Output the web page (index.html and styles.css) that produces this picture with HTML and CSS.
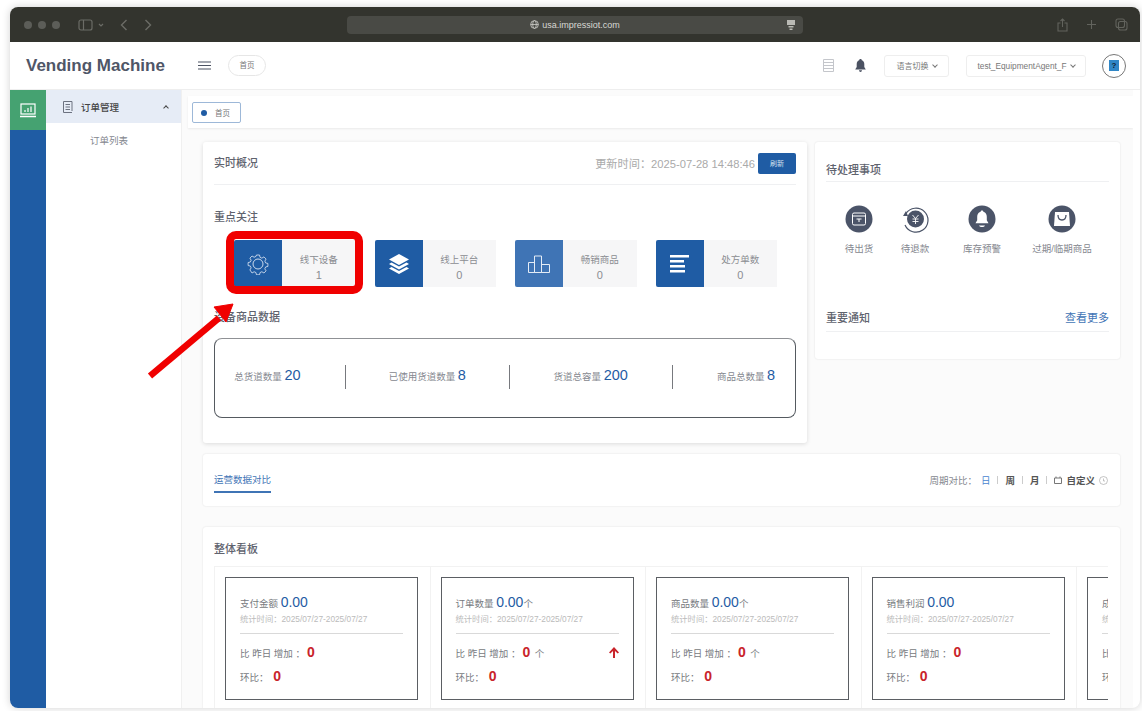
FILE: index.html
```html
<!doctype html>
<html lang="zh-CN">
    <head>
        <meta charset="UTF-8" />
        <title>Vending Machine</title>
        <link rel="stylesheet" href="styles.css">
    </head>
    <body>
        <div class="window">
            <!-- browser chrome -->
            <div class="chrome">
                <div class="chrome-left">
                    <span class="dot"></span><span class="dot"></span><span class="dot"></span>
                    <svg class="side-ico" width="26" height="12" viewBox="0 0 26 12" fill="none" stroke="#6b6c66" stroke-width="1.2"><rect x="1" y="1" width="13" height="10" rx="2"/><path d="M5.5 1v10"/><path d="M21 5l2 2 2-2"/></svg>
                    <svg class="nav-ico" width="8" height="12" viewBox="0 0 8 12" fill="none" stroke="#6b6c66" stroke-width="1.4"><path d="M6.5 1L1.5 6l5 5"/></svg>
                    <svg class="nav-ico" width="8" height="12" viewBox="0 0 8 12" fill="none" stroke="#6b6c66" stroke-width="1.4"><path d="M1.5 1l5 5-5 5"/></svg>
                </div>
                <div class="urlbar">
                    <span class="url"><svg width="9" height="9" viewBox="0 0 10 10" fill="none" stroke="#cfcfca" stroke-width=".9"><circle cx="5" cy="5" r="4.3"/><ellipse cx="5" cy="5" rx="2" ry="4.3"/><path d="M.7 5h8.6"/></svg>usa.impressiot.com</span>
                    <svg class="url-ico" width="10" height="12" viewBox="0 0 10 12" fill="#b9b9b4"><path d="M1 1h8v5H1zM2.5 7h5v1.500h-5zM3.500 9.500h3V11h-3z"/></svg>
                </div>
                <div class="chrome-right">
                    <svg width="11" height="14" viewBox="0 0 11 14" fill="none" stroke="#62635d" stroke-width="1.1"><path d="M3.500 5H1v8h9V5H7.500M5.500 9V1M3.500 3l2-2 2 2"/></svg>
                    <svg width="11" height="11" viewBox="0 0 11 11" fill="none" stroke="#62635d" stroke-width="1.1"><path d="M5.500 1v9M1 5.500h9"/></svg>
                    <svg width="13" height="13" viewBox="0 0 13 13" fill="none" stroke="#62635d" stroke-width="1.1"><rect x="1" y="1" width="8.500" height="8.500" rx="2"/><rect x="3.500" y="3.500" width="8.500" height="8.500" rx="2"/></svg>
                </div>
            </div>

            <!-- app header -->
            <header class="topbar">
                <div class="logo">Vending Machine</div>
                <svg class="burger" width="13" height="9" viewBox="0 0 13 9" fill="none" stroke="#4b5262" stroke-width="1.200"><path d="M0 1h13M0 4.500h13M0 8h13"/></svg>
                <span class="crumb">首页</span>
                <div class="topbar-right">
                    <svg class="doc-ico" width="11" height="13" viewBox="0 0 11 13" fill="none" stroke="#c4c6cb"><path d="M.5.500h10v12H.5zM.5 3.500h10M.5 6.500h10M.5 9.500h10"/></svg>
                    <svg class="bell-ico" width="11" height="13" viewBox="0 0 11 13" fill="#4b5262"><path d="M5.500 0C6.300 0 6.700.500 6.800 1.200 8.500 1.800 9.300 3.200 9.300 5v3l1.500 2.500H.2L1.700 8V5c0-1.800.8-3.200 2.500-3.800C4.300.500 4.700 0 5.500 0zM4 11.300h3C6.900 12.300 6.300 13 5.500 13S4.100 12.300 4 11.300z"/></svg>
                    <span class="select lang">语言切换 <i class="chev"></i></span>
                    <span class="select user">test_EquipmentAgent_F <i class="chev"></i></span>
                    <span class="avatar"><span class="avatar-img">?</span></span>
                </div>
            </header>

            <div class="body">
                <nav class="rail">
                    <div class="rail-item">
                        <svg width="16" height="15" viewBox="0 0 16 15" fill="none" stroke="#fff" stroke-width="1.200"><rect x="1" y="1" width="14" height="10"/><path d="M0 13.500h16" stroke-width="1.500"/><path d="M5 9V7M8 9V5M11 9V3.500"/></svg>
                    </div>
                </nav>
                <aside class="menu">
                    <div class="menu-head">
                        <svg width="10" height="12" viewBox="0 0 10 12" fill="none" stroke="#6c7280"><path d="M9 10V.5H.5v11H9M2.500 3.500h4.500M2.500 6h4.500M2.500 8.500h4.500"/></svg>
                        <span class="menu-title">订单管理</span>
                        <i class="chev up"></i>
                    </div>
                    <div class="menu-sub">订单列表</div>
                </aside>

                <main class="content">
                    <div class="tabs">
                        <span class="tab"><i class="tab-dot"></i>首页</span>
                    </div>

                    <div class="top-row">
                        <section class="card overview">
                            <div class="card-head">
                                <h3>实时概况</h3>
                                <div class="updated">更新时间：2025-07-28 14:48:46<button class="refresh">刷新</button></div>
                            </div>

                            <h3 class="focus-title">重点关注</h3>
                            <div class="tiles">
                                <div class="tile">
                                    <div class="tile-ico">
                                        <svg width="22" height="22" viewBox="0 0 22 22" fill="none" stroke="#dfe8f4" stroke-width=".9"><path d="M9.300 1h3.400l.6 2.600 2 .9 2.300-1.400 2.400 2.400-1.400 2.300.9 2 2.500.6v3.300l-2.500.6-.9 2-.1.100 1.500 2.200-2.400 2.400-2.300-1.400-2 .9-.6 2.500H9.300l-.6-2.500-2-.9-2.300 1.400L2 17.600l1.400-2.300-.9-2-2.500-.6V9.400l2.500-.6.9-2L2 4.500l2.400-2.400 2.300 1.400 2-.9z" transform="translate(1.100 1.100) scale(.9)"/><circle cx="11" cy="11" r="5"/></svg>
                                    </div>
                                    <div class="tile-text"><span>线下设备</span><span class="tile-num">1</span></div>
                                </div>
                                <div class="tile">
                                    <div class="tile-ico">
                                        <svg width="22" height="20" viewBox="0 0 22 20" fill="#fff"><path d="M11 0l10 5.500L11 11 1 5.500z"/><path d="M3.500 8.500l7.500 4.100 7.500-4.100 2.500 1.400L11 15.400 1 9.900z"/><path d="M3.500 13l7.500 4.100 7.500-4.100 2.500 1.400L11 20 1 14.400z"/></svg>
                                    </div>
                                    <div class="tile-text"><span>线上平台</span><span class="tile-num">0</span></div>
                                </div>
                                <div class="tile">
                                    <div class="tile-ico light">
                                        <svg width="22" height="18" viewBox="0 0 22 18" fill="none" stroke="#e4ecf6"><path d="M.5 7.500h6v10h-6zM6.500 1h7v16.500h-7zM13.500 9.500h8v8h-8z"/></svg>
                                    </div>
                                    <div class="tile-text"><span>畅销商品</span><span class="tile-num">0</span></div>
                                </div>
                                <div class="tile">
                                    <div class="tile-ico">
                                        <svg width="20" height="18" viewBox="0 0 20 18" fill="#fff"><path d="M0 0h19v2.500H0zM0 5h14v2.500H0zM0 10h15v2.500H0zM0 15h15v2.500H0z"/></svg>
                                    </div>
                                    <div class="tile-text"><span>处方单数</span><span class="tile-num">0</span></div>
                                </div>
                            </div>

                            <h3 class="device-title">设备商品数据</h3>
                            <div class="device-box">
                                <div class="device-item first">总货道数量 <b>20</b></div>
                                <div class="device-item">已使用货道数量 <b>8</b></div>
                                <div class="device-item">货道总容量 <b>200</b></div>
                                <div class="device-item last">商品总数量 <b>8</b></div>
                            </div>
                        </section>

                        <section class="card pending">
                            <div class="pending-head"><h3>待处理事项</h3></div>
                            <div class="todo">
                                <div class="todo-item w1">
                                    <svg width="28" height="28" viewBox="0 0 28 28"><circle cx="14" cy="14" r="13.500" fill="#4b5468"/><rect x="7.500" y="8" width="13" height="12" rx="1.500" fill="none" stroke="#fff"/><path d="M7.500 11h13M11.500 14h5M14 14v3" fill="none" stroke="#fff"/></svg>
                                    <span>待出货</span>
                                </div>
                                <div class="todo-item w2">
                                    <svg width="28" height="28" viewBox="0 0 28 28"><path d="M5 8.500A12 12 0 1 1 4 20" fill="none" stroke="#4b5468" stroke-width="1.200"/><path d="M2 11l3-5 2 5z" fill="#4b5468"/><circle cx="14.500" cy="14" r="8.500" fill="#4b5468"/><path d="M11.500 10l3 3.500 3-3.500M11.500 14h6M11.500 16.500h6M14.500 13.500V19" fill="none" stroke="#fff" stroke-width=".9"/></svg>
                                    <span>待退款</span>
                                </div>
                                <div class="todo-item w3">
                                    <svg width="28" height="28" viewBox="0 0 28 28"><circle cx="14" cy="14" r="13.500" fill="#4b5468"/><path d="M14 5.500c.8 0 1.300.5 1.400 1.200 2.500.7 3.400 2.800 3.400 5v3.500l1.700 3H7.500l1.700-3v-3.500c0-2.200.9-4.300 3.400-5 .1-.7.6-1.200 1.400-1.200z" fill="#fff"/><path d="M11 20.500h6c-.5 1.200-1.700 1.500-3 1.500s-2.500-.3-3-1.500z" fill="#fff"/></svg>
                                    <span>库存预警</span>
                                </div>
                                <div class="todo-item w4">
                                    <svg width="28" height="28" viewBox="0 0 28 28"><circle cx="14" cy="14" r="13.500" fill="#4b5468"/><path d="M7 7h14l1 14H6z" fill="#fff"/><path d="M10 10c0 3.500 1.500 5 4 5s4-1.500 4-5" fill="none" stroke="#4b5468" stroke-width="1.300"/></svg>
                                    <span>过期/临期商品</span>
                                </div>
                            </div>
                            <div class="notice-head"><h3>重要通知</h3><a class="more">查看更多</a></div>
                        </section>
                    </div>

                    <section class="card period">
                        <span class="period-tab">运营数据对比</span>
                        <div class="period-opts">
                            周期对比：<span class="on">日</span><i class="bar"></i><b>周</b><i class="bar"></i><b>月</b><i class="bar"></i>
                            <svg width="8" height="8" viewBox="0 0 8 8" fill="none" stroke="#777"><path d="M.5 2h7v5.500h-7zM2 .5v1.500M6 .5v1.500"/></svg>
                            <b>自定义</b>
                            <svg width="9" height="9" viewBox="0 0 9 9" fill="none" stroke="#aaa" stroke-width=".7"><circle cx="4.500" cy="4.500" r="4"/><path d="M4.500 2.500v2.500h1.500"/></svg>
                        </div>
                    </section>

                    <section class="card board">
                        <h3>整体看板</h3>
                        <div class="board-row">
                            <div class="cell">
                                <div class="stat">
                                    <div class="stat-main">支付金额 <b>0.00</b></div>
                                    <div class="stat-date">统计时间：2025/07/27-2025/07/27</div>
                                    <div class="stat-line">比 昨日 增加 ：<strong>0</strong></div>
                                    <div class="stat-line">环比： <strong>0</strong></div>
                                </div>
                            </div>
                            <div class="cell">
                                <div class="stat">
                                    <div class="stat-main">订单数量 <b>0.00</b>个</div>
                                    <div class="stat-date">统计时间：2025/07/27-2025/07/27</div>
                                    <div class="stat-line">比 昨日 增加 ：<strong>0</strong> 个
                                        <svg class="up-arrow" width="10" height="11" viewBox="0 0 10 11" fill="#c9242b"><path d="M5 0l5 5.500-1.300 1L6 4v7H4V4L1.300 6.500 0 5.500z"/></svg>
                                    </div>
                                    <div class="stat-line">环比： <strong>0</strong></div>
                                </div>
                            </div>
                            <div class="cell">
                                <div class="stat">
                                    <div class="stat-main">商品数量 <b>0.00</b>个</div>
                                    <div class="stat-date">统计时间：2025/07/27-2025/07/27</div>
                                    <div class="stat-line">比 昨日 增加 ：<strong>0</strong> 个</div>
                                    <div class="stat-line">环比： <strong>0</strong></div>
                                </div>
                            </div>
                            <div class="cell">
                                <div class="stat">
                                    <div class="stat-main">销售利润 <b>0.00</b></div>
                                    <div class="stat-date">统计时间：2025/07/27-2025/07/27</div>
                                    <div class="stat-line">比 昨日 增加 ：<strong>0</strong></div>
                                    <div class="stat-line">环比： <strong>0</strong></div>
                                </div>
                            </div>
                            <div class="cell">
                                <div class="stat">
                                    <div class="stat-main">成本金额 <b>0.00</b></div>
                                    <div class="stat-date">统计时间：2025/07/27-2025/07/27</div>
                                    <div class="stat-line">比 昨日 增加 ：<strong>0</strong></div>
                                    <div class="stat-line">环比： <strong>0</strong></div>
                                </div>
                            </div>
                        </div>
                    </section>
                </main>
            </div>

            <!-- red annotation drawn over the screenshot -->
            <div class="mark-box"></div>
            <svg class="mark-arrow" width="90" height="80" viewBox="0 0 90 80"><path d="M3 75L72 17" stroke="#f00000" stroke-width="6.500"/><path d="M86 3L79 21 67 6z" fill="#f00000" stroke="#f00000" stroke-width="1"/></svg>
        </div>
    </body>
</html>
```

FILE: styles.css
```css
:root {
    --blue: #1f5ca4;
    --blue-light: #3f74b5;
    --green: #45a271;
    --ink: #4b5262;
    --muted: #8a8d94;
    --line: #eff0f2;
    --red: #c9242b;
}

* {
    box-sizing: border-box;
}

body {
    margin: 0;
    height: 711px;
    overflow: hidden;
    background: #fff;
    font-family: "Liberation Sans", "Noto Sans CJK SC", sans-serif;
    color: var(--ink);
}

h3 {
    margin: 0;
    font-size: 11px;
    font-weight: 500;
    color: #5f636e;
}

.window {
    position: absolute;
    left: 10px;
    top: 7px;
    width: 1130px;
    height: 701px;
    border-radius: 8px;
    overflow: hidden;
    background: #fff;
    box-shadow: 0 0 8px rgba(0, 0, 0, 0.18);
}

/* browser chrome */
.chrome {
    height: 35px;
    display: flex;
    align-items: center;
    background: #33342e;
}

.chrome-left {
    width: 337px;
    display: flex;
    align-items: center;
    padding-left: 14px;
}

.dot {
    width: 8px;
    height: 8px;
    margin-right: 6px;
    border-radius: 50%;
    background: #5c5d58;
}

.side-ico {
    margin-left: 12px;
}

.nav-ico {
    margin-left: 16px;
}

.urlbar {
    width: 456px;
    height: 18px;
    display: flex;
    align-items: center;
    justify-content: center;
    position: relative;
    border-radius: 4px;
    background: #494a45;
    color: #d8d8d4;
    font-size: 9px;
}

.url {
    display: flex;
    align-items: center;
    gap: 3px;
}

.url-ico {
    position: absolute;
    right: 7px;
    top: 3px;
}

.chrome-right {
    flex: 1;
    display: flex;
    align-items: center;
    justify-content: flex-end;
    gap: 18px;
    padding-right: 12px;
}

/* app header */
.topbar {
    height: 48px;
    display: flex;
    align-items: center;
    border-bottom: 1px solid #eee;
}

.logo {
    width: 173px;
    padding-left: 16px;
    font-size: 17px;
    font-weight: 700;
    white-space: nowrap;
    color: #4f5667;
}

.burger {
    margin-left: 15px;
}

.crumb {
    margin-left: 17px;
    width: 38px;
    height: 21px;
    line-height: 19px;
    text-align: center;
    border: 1px solid #e6e6e6;
    border-radius: 11px;
    font-size: 7.500px;
    color: #777;
}

.topbar-right {
    margin-left: auto;
    display: flex;
    align-items: center;
    padding-right: 14px;
}

.doc-ico {
    margin-right: 21px;
}

.bell-ico {
    margin-right: 18px;
}

.select {
    height: 22px;
    display: flex;
    align-items: center;
    justify-content: center;
    gap: 4px;
    border: 1px solid #eee;
    border-radius: 3px;
    font-size: 8px;
    color: #777;
}

.lang {
    width: 65px;
    margin-right: 17px;
}

.user {
    width: 120px;
    margin-right: 16px;
    font-size: 8.300px;
}

.chev {
    display: inline-block;
    width: 4px;
    height: 4px;
    margin-top: -2px;
    border-right: 1px solid #777;
    border-bottom: 1px solid #777;
    transform: rotate(45deg);
}

.chev.up {
    margin: 2px 0 0 auto;
    border-color: #444;
    transform: rotate(225deg);
}

.avatar {
    width: 24px;
    height: 24px;
    display: flex;
    align-items: center;
    justify-content: center;
    border: 1px solid #777;
    border-radius: 50%;
}

.avatar-img {
    width: 10px;
    height: 11px;
    line-height: 11px;
    text-align: center;
    background: #2f86c6;
    color: #123;
    font-size: 8px;
    font-weight: 700;
}

/* left side */
.body {
    height: 618px;
    display: flex;
}

.rail {
    width: 36px;
    background: var(--blue);
}

.rail-item {
    height: 40px;
    display: flex;
    align-items: center;
    justify-content: center;
    background: var(--green);
}

.menu {
    width: 136px;
    border-right: 1px solid #f0f0f0;
}

.menu-head {
    height: 33px;
    display: flex;
    align-items: center;
    padding: 0 13px 0 17px;
    background: #e6ecf6;
}

.menu-title {
    margin-left: 8px;
    font-size: 9.500px;
    font-weight: 500;
    color: #444;
}

.menu-sub {
    margin-top: 10px;
    padding-left: 44px;
    font-size: 9.500px;
    color: #85888f;
}

/* main area */
.content {
    width: 951px;
    padding: 6px 13px 0 6px;
    overflow: hidden;
    background: #fbfbfb;
    margin-right: 7px;
}

.tabs {
    height: 32px;
    margin-right: -13px;
    padding: 6px 0 0 4px;
    background: #fff;
    box-shadow: 0 1px 2px rgba(0, 0, 0, 0.07);
}

.tab {
    width: 49px;
    height: 21px;
    display: flex;
    align-items: center;
    padding-left: 8px;
    gap: 8px;
    border: 1px solid #9db8d8;
    border-radius: 2px;
    font-size: 7.500px;
    color: #777;
}

.tab-dot {
    width: 6px;
    height: 6px;
    border-radius: 50%;
    background: var(--blue);
}

.top-row {
    display: flex;
    align-items: flex-start;
    gap: 8px;
    margin: 14px 0 0 15px;
}

.card {
    border-radius: 3px;
    background: #fff;
}

.overview {
    width: 604px;
    height: 301px;
    padding: 0 11px;
    box-shadow: 0 1px 4px rgba(0, 0, 0, 0.13);
}

.card-head {
    height: 43px;
    display: flex;
    align-items: center;
    justify-content: space-between;
    border-bottom: 1px solid var(--line);
}

.card-head h3 {
    margin-top: -2px;
}

.updated {
    display: flex;
    align-items: center;
    gap: 3px;
    font-size: 11.200px;
    color: #aaa;
}

.refresh {
    width: 38px;
    height: 21px;
    padding: 0;
    border: none;
    border-radius: 2px;
    background: var(--blue);
    color: #d5e0ee;
    font-size: 7px;
    font-family: inherit;
}

.focus-title {
    margin-top: 23px;
}

.tiles {
    display: flex;
    gap: 19px;
    margin: 16px 0 0 20px;
}

.tile {
    width: 121.500px;
    height: 47px;
    display: flex;
    background: #f6f6f7;
}

.tile-ico {
    width: 48px;
    display: flex;
    align-items: center;
    justify-content: center;
    border-radius: 2px 0 0 2px;
    background: var(--blue);
}

.tile-ico.light {
    background: var(--blue-light);
}

.tile-text {
    flex: 1;
    display: flex;
    flex-direction: column;
    align-items: center;
    justify-content: center;
    gap: 3px;
    padding-top: 6px;
    font-size: 9.500px;
    color: #8b8d92;
}

.tile-num {
    font-size: 11px;
    line-height: 13px;
}

.device-title {
    margin-top: 21px;
}

.device-box {
    height: 80px;
    margin-top: 14px;
    display: flex;
    align-items: center;
    padding-bottom: 2px;
    border: 1px solid #555a60;
    border-top-color: #8f9195;
    border-radius: 8px;
}

.device-item {
    flex: 1;
    height: 24px;
    line-height: 20px;
    text-align: center;
    white-space: nowrap;
    border-left: 1px solid #77797e;
    font-size: 9.500px;
    color: #85888f;
}

.device-item.first {
    flex: none;
    width: 130px;
    border-left: none;
    padding-right: 44px;
    padding-left: 19px;
}

.device-item.last {
    flex: none;
    width: 123px;
    padding-left: 24px;
}

.device-item b {
    font-size: 14.500px;
    font-weight: 400;
    color: var(--blue);
}

.pending {
    width: 305px;
    height: 217px;
    padding: 0 11px;
    box-shadow: 0 0 2px rgba(0, 0, 0, 0.12);
}

.pending-head {
    height: 40px;
    padding-top: 19px;
    border-bottom: 1px solid var(--line);
}

.todo {
    display: flex;
    margin-top: 23px;
    height: 100px;
}

.todo-item {
    display: flex;
    flex-direction: column;
    align-items: center;
    gap: 8px;
    font-size: 9.500px;
    color: #85888f;
}

.todo-item.w1 {
    width: 44px;
    margin-left: 11px;
}

.todo-item.w2 {
    width: 44px;
    margin-left: 12px;
}

.todo-item.w3 {
    width: 44px;
    margin-left: 23px;
}

.todo-item.w4 {
    width: 70px;
    margin-left: 23px;
}

.notice-head {
    height: 27px;
    display: flex;
    align-items: flex-start;
    justify-content: space-between;
    padding-top: 4px;
    border-bottom: 1px solid var(--line);
}

.more {
    font-size: 11px;
    color: var(--blue-light);
}

.period {
    height: 52px;
    margin: 11px 0 0 15px;
    display: flex;
    align-items: flex-start;
    justify-content: space-between;
    padding: 0 12px 0 11px;
    box-shadow: 0 0 2px rgba(0, 0, 0, 0.12);
}

.period-tab {
    height: 39px;
    padding-top: 18px;
    border-bottom: 2px solid var(--blue-light);
    font-size: 9.500px;
    color: var(--blue-light);
}

.period-opts {
    display: flex;
    align-items: center;
    gap: 4px;
    margin-top: 19px;
    font-size: 9.500px;
    color: #85888f;
}

.period-opts .on {
    color: #4a86d0;
}

.period-opts b {
    font-weight: 600;
    color: #555;
}

.bar {
    width: 1px;
    height: 8px;
    margin: 0 3px;
    background: #ccc;
}

.board {
    height: 190px;
    margin: 21px 0 0 15px;
    padding: 13px 12px 0 11px;
    box-shadow: 0 0 2px rgba(0, 0, 0, 0.12);
}

.board-row {
    display: flex;
    margin-top: 10px;
    overflow: hidden;
    border-top: 1px solid #f2f2f2;
}

.cell {
    flex: none;
    width: 215.500px;
    height: 145px;
    padding: 10px 0 0 10px;
    border-left: 1px solid #f2f2f2;
}

.stat {
    width: 193px;
    height: 123px;
    padding: 16px 14px 0;
    border: 1px solid #5b5e63;
    white-space: nowrap;
    overflow: hidden;
}

.stat-main {
    font-size: 9.500px;
    line-height: 16px;
    color: #777a80;
}

.stat-main b {
    font-size: 14px;
    font-weight: 400;
    color: var(--blue);
}

.stat-date {
    height: 22px;
    padding-top: 1px;
    margin-bottom: 9px;
    border-bottom: 1px solid #d9d9d9;
    font-size: 8.300px;
    color: #bbb;
    line-height: 12px;
}

.stat-line {
    position: relative;
    height: 24px;
    line-height: 18px;
    font-size: 9.500px;
    color: #777a80;
}

.stat-line strong {
    font-size: 14px;
    color: var(--red);
    margin: 0 2px;
}

.up-arrow {
    position: absolute;
    right: 0;
    top: 4px;
}

/* red annotation */
.mark-box {
    position: absolute;
    left: 216px;
    top: 224px;
    width: 137px;
    height: 63px;
    border: 8px solid #f00000;
    border-radius: 10px;
}

.mark-arrow {
    position: absolute;
    left: 137px;
    top: 294px;
}
```
